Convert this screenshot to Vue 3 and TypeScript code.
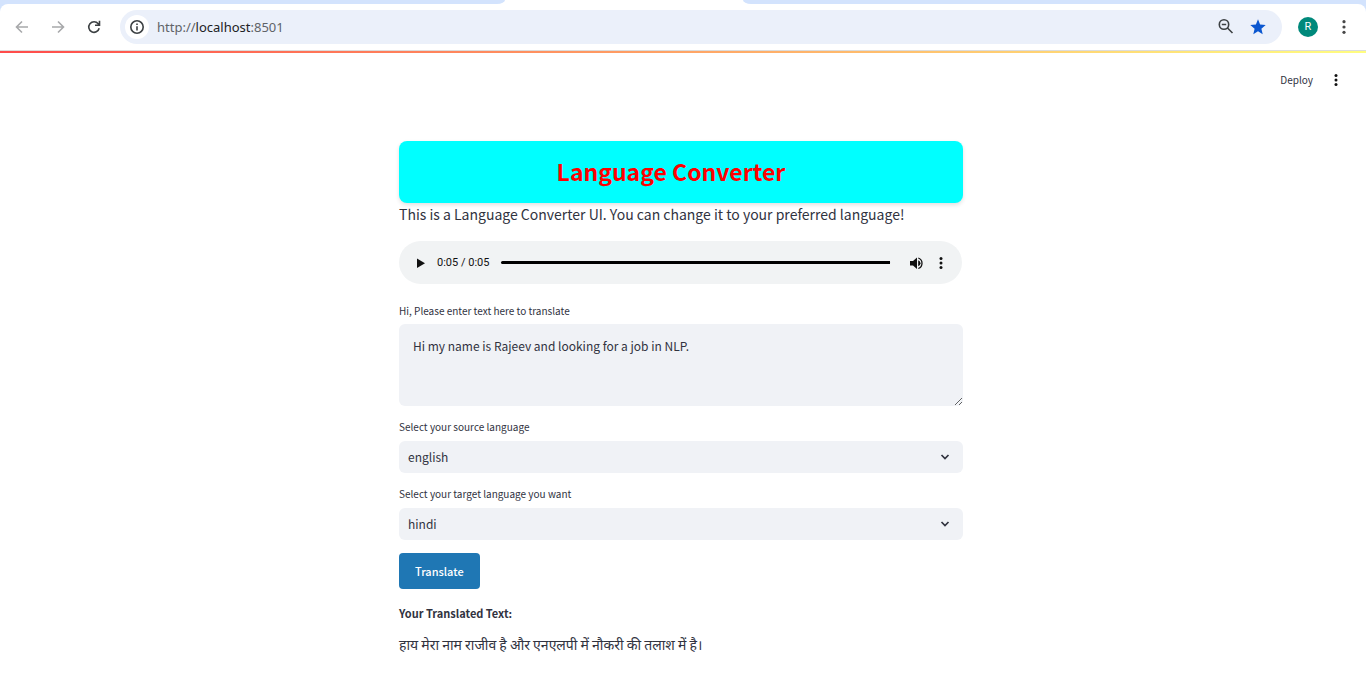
<script setup lang="ts">
import { ref } from 'vue'

const address = ref('http://localhost:8501')
const position = ref(100)
const text = ref('Hi my name is Rajeev and looking for a job in NLP.')
const languages = ['english', 'hindi', 'french', 'german', 'spanish']
const source = ref('english')
const target = ref('hindi')
const translated = ref('हाय मेरा नाम राजीव है और एनएलपी में नौकरी की तलाश में है।')
</script>

<template>
  <div class="page">
    <header class="browser">
      <div class="tabs">
        <div class="strip left"></div>
        <div class="tab"></div>
        <div class="strip right"></div>
      </div>
      <div class="toolbar">
        <button class="icon nav off" aria-label="Back">
          <svg width="18" height="18" viewBox="0 0 18 18"><path d="M15 9H4M9 3.500L3.500 9L9 14.500" /></svg>
        </button>
        <button class="icon nav off" aria-label="Forward">
          <svg width="18" height="18" viewBox="0 0 18 18"><path d="M3 9H14M9 3.500L14.500 9L9 14.500" /></svg>
        </button>
        <button class="icon nav" aria-label="Reload">
          <svg width="18" height="18" viewBox="0 0 18 18"><path d="M14.200 10.300A5.300 5.300 0 1 1 13.200 5.700L14.300 6.900M14.500 2.800V7.200H10" /></svg>
        </button>
        <div class="omnibox">
          <button class="icon info" aria-label="View site information">
            <svg width="16" height="16" viewBox="0 0 16 16"><circle cx="8" cy="8" r="6.200" /><path d="M8 7.200V11.500M8 4.600V6" /></svg>
          </button>
          <div class="address">
            <input v-model="address" aria-label="Address" />
            <span class="shown" aria-hidden="true">http://<b>localhost</b>:8501</span>
          </div>
          <button class="icon" aria-label="Zoom">
            <svg width="18" height="18" viewBox="0 0 18 18"><circle cx="7" cy="6.500" r="4.700" /><path d="M4.800 6.500H9.200M10.500 10L15.500 15" /></svg>
          </button>
          <button class="icon star" aria-label="Edit bookmark">
            <svg width="18" height="18" viewBox="0 0 18 18"><path d="M9 1.300L11.100 6.500L16.700 7L12.400 10.700L13.700 16.200L9 13.300L4.300 16.200L5.600 10.700L1.300 7L6.900 6.500Z" /></svg>
          </button>
        </div>
        <button class="avatar" aria-label="Profile">R</button>
        <button class="icon dots menu" aria-label="Browser menu">
          <svg width="16" height="18" viewBox="0 0 16 18"><circle cx="8" cy="3.700" r="1.600" /><circle cx="8" cy="9" r="1.600" /><circle cx="8" cy="14.300" r="1.600" /></svg>
        </button>
      </div>
    </header>
    <div class="rainbow"></div>
    <div class="appbar">
      <button class="deploy">Deploy</button>
      <button class="icon dots" aria-label="Main menu">
        <svg width="14" height="14" viewBox="0 0 14 14"><circle cx="7" cy="2.500" r="1.500" /><circle cx="7" cy="7" r="1.500" /><circle cx="7" cy="11.500" r="1.500" /></svg>
      </button>
    </div>
    <main>
      <h1>Language Converter</h1>
      <p class="intro">This is a Language Converter UI. You can change it to your preferred language!</p>

      <div class="player">
        <button class="icon solid" aria-label="Play">
          <svg width="20" height="20" viewBox="0 0 20 20"><path d="M6 5.500V15L14 10.200Z" /></svg>
        </button>
        <span class="time">0:05 / 0:05</span>
        <input v-model="position" type="range" min="0" max="100" aria-label="Playback position" />
        <button class="icon solid sound" aria-label="Mute">
          <svg width="18" height="18" viewBox="0 0 18 18">
            <path d="M3 7V11.500H6L10 15V3.500L6 7Z" />
            <path d="M11.200 6.200Q13.500 7.200 13.500 9.250T11.200 12.300Z" />
            <path class="wave" d="M11.300 4Q15 5.300 15 9.250T11.300 14.500" />
          </svg>
        </button>
        <button class="icon dots" aria-label="More options">
          <svg width="16" height="16" viewBox="0 0 16 16"><circle cx="8" cy="3.500" r="1.500" /><circle cx="8" cy="8" r="1.500" /><circle cx="8" cy="12.500" r="1.500" /></svg>
        </button>
      </div>

      <label class="first" for="text">Hi, Please enter text here to translate</label>
      <textarea id="text" v-model="text"></textarea>

      <label for="source">Select your source language</label>
      <div class="select">
        <select id="source" v-model="source">
          <option v-for="l in languages" :key="l">{{ l }}</option>
        </select>
        <svg width="12" height="12" viewBox="0 0 12 12"><path d="M2.500 4L6 7.500L9.500 4" /></svg>
      </div>

      <label for="target">Select your target language you want</label>
      <div class="select">
        <select id="target" v-model="target">
          <option v-for="l in languages" :key="l">{{ l }}</option>
        </select>
        <svg width="12" height="12" viewBox="0 0 12 12"><path d="M2.500 4L6 7.500L9.500 4" /></svg>
      </div>

      <button class="translate">Translate</button>
      <h2>Your Translated Text:</h2>
      <p class="result" lang="hi">{{ translated }}</p>
    </main>
  </div>
</template>

<style>
body {
  margin: 0;
  background: #fff;
}
</style>

<style scoped>
* {
  box-sizing: border-box;
}
.page {
  font-family: "Noto Sans CJK SC", "Noto Sans", sans-serif;
  color: #31333f;
}
button {
  border: 0;
  padding: 0;
  background: none;
  font-family: inherit;
  color: inherit;
  cursor: pointer;
}
.icon {
  display: flex;
  align-items: center;
  justify-content: center;
  flex: none;
}
.icon svg {
  fill: none;
  stroke: #3c4043;
  stroke-width: 1.6;
}
.icon.off svg {
  stroke: #a8a9ab;
}
.dots svg,
.solid svg {
  fill: #111;
  stroke: none;
}
.menu svg {
  fill: #474747;
}
.browser {
  background: #d3e3fd;
  border-bottom: 1px solid #dcdcdc;
}
.tabs {
  height: 4px;
  display: flex;
  background: #fff;
}
.strip {
  background: #d3e3fd;
}
.left {
  width: 37%;
  border-bottom-right-radius: 8px 4px;
}
.tab {
  width: 238px;
}
.right {
  flex: 1;
  border-bottom-left-radius: 8px 4px;
}
.toolbar {
  height: 46px;
  display: flex;
  align-items: center;
  padding: 0 14px 0 13px;
  background: #fff;
  border-radius: 8px 8px 0 0;
}
.nav {
  width: 18px;
  margin-right: 18px;
}
.omnibox {
  flex: 1;
  height: 34px;
  display: flex;
  align-items: center;
  gap: 14px;
  padding: 0 15px 0 5px;
  margin-left: -1px;
  border-radius: 17px;
  background: #ebf0fa;
}
.info {
  width: 24px;
  height: 24px;
  border-radius: 50%;
  background: #fff;
}
.address {
  flex: 1;
  display: grid;
  margin-left: -6px;
  font: 13px/20px "Noto Sans", sans-serif;
  color: #5f6368;
}
.address input,
.shown {
  grid-area: 1 / 1;
}
.address input {
  border: 0;
  padding: 0;
  outline: 0;
  background: none;
  font: inherit;
  color: transparent;
}
.shown {
  pointer-events: none;
}
.shown b {
  font-weight: 400;
  color: #202124;
}
.star svg {
  fill: #0b57d0;
  stroke: none;
}
.avatar {
  width: 20px;
  height: 20px;
  margin: 0 18px 0 16px;
  border-radius: 50%;
  background: #00897b;
  color: #fff;
  font: 11px/20px Roboto, sans-serif;
}
.rainbow {
  height: 2px;
  background: linear-gradient(to right, #ff4b4b, #fffd80);
}
.appbar {
  height: 54px;
  display: flex;
  justify-content: flex-end;
  align-items: center;
  gap: 16px;
  padding-right: 23px;
}
.deploy {
  font-size: 10px;
  line-height: 16px;
}
main {
  max-width: 564px;
  margin: 34px auto 0;
  position: relative;
  right: 2px;
}
h1 {
  margin: 0;
  padding: 14px 20px 16px 0;
  border-radius: 8px;
  background: #0ff;
  box-shadow: 0 2px 4px rgba(0, 0, 0, 0.12);
  text-align: center;
  font-size: 23px;
  line-height: 32px;
  color: #f00;
}
.intro {
  margin: 0;
  font-size: 14px;
  line-height: 22px;
}
.player {
  height: 43px;
  display: flex;
  align-items: center;
  margin: 16px 1px 0 0;
  padding: 0 13px 0 12px;
  border-radius: 22px;
  background: #f1f3f4;
}
.time {
  margin: 0 12px 0 6px;
  font: 11px/16px Roboto, sans-serif;
  color: #111;
}
.player input {
  flex: 1;
  min-width: 0;
  height: 3px;
  margin: 0;
  appearance: none;
  border-radius: 2px;
  background: #000;
}
.player input::-webkit-slider-thumb {
  appearance: none;
  width: 3px;
  height: 3px;
  background: #000;
}
.sound {
  margin: 0 8px 0 17px;
}
.wave {
  fill: none;
  stroke: #111;
  stroke-width: 1.3;
}
label {
  display: block;
  margin: 12px 0 5px;
  font-size: 10px;
  line-height: 18px;
}
label.first {
  margin: 18px 0 4px;
}
textarea {
  display: block;
  width: 100%;
  height: 82px;
  padding: 12px 14px;
  border: 0;
  border-radius: 6px;
  outline: 0;
  background: #f0f2f6;
  font: inherit;
  font-size: 12px;
  line-height: 20px;
  color: inherit;
  resize: vertical;
}
.select {
  display: grid;
  align-items: center;
}
.select select,
.select svg {
  grid-area: 1 / 1;
}
.select select {
  width: 100%;
  height: 32px;
  padding: 0 30px 2px 9px;
  appearance: none;
  border: 0;
  border-radius: 6px;
  outline: 0;
  background: #f0f2f6;
  font: inherit;
  font-size: 12px;
  color: inherit;
}
.select svg {
  justify-self: end;
  margin-right: 12px;
  pointer-events: none;
  fill: none;
  stroke: #31333f;
  stroke-width: 1.7;
}
.translate {
  display: block;
  margin-top: 13px;
  height: 36px;
  padding: 0 16px;
  border-radius: 4px;
  background: #1f77b4;
  color: #fff;
  font-size: 11px;
  font-weight: 500;
}
h2 {
  margin: 14px 0 0;
  font-size: 11px;
  line-height: 20px;
  font-weight: 600;
}
.result {
  margin: 9px 0 0;
  font-size: 14px;
  line-height: 24px;
}
</style>
